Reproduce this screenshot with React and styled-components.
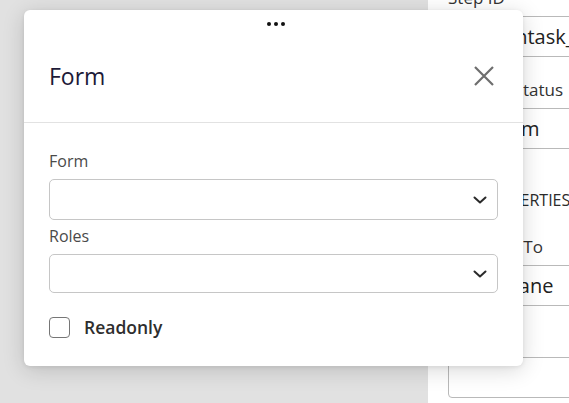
import React from "react";
import styled, { createGlobalStyle } from "styled-components";

const Global = createGlobalStyle`
  html, body { margin: 0; padding: 0; }
  body {
    width: 569px;
    height: 403px;
    overflow: hidden;
    font-family: "Open Sans", "Noto Sans", sans-serif;
  }
`;

const Page = styled.div`
  position: relative;
  display: flex;
  width: 569px;
  height: 403px;
  overflow: hidden;
`;

const Canvas = styled.div`
  flex: 1;
  background: #e1e1e1;
`;

const SidePanel = styled.aside`
  width: 141px;
  background: #ffffff;
  overflow: hidden;
  display: flex;
  flex-direction: column;
  padding-left: 20px;
  box-sizing: border-box;
`;

const SideInner = styled.div`
  display: flex;
  flex-direction: column;
  margin-top: -13px;
  width: 320px;
`;

const SideField = styled.div`
  display: flex;
  flex-direction: column;
  gap: 7px;
  margin-top: ${(p) => p.$top}px;
`;

const SideLabel = styled.div`
  font-size: 17px;
  line-height: 22px;
  color: #333;
  white-space: nowrap;
`;

const SideInput = styled.div`
  height: 41px;
  box-sizing: border-box;
  border: 1px solid #b9b9b9;
  border-radius: 4px;
  display: flex;
  align-items: center;
  padding: 0 12px;
  font-size: 20px;
  color: #222;
  white-space: nowrap;
`;

const SectionTitle = styled.div`
  margin-top: 40px;
  font-size: 16px;
  line-height: 22px;
  color: #2b2b2b;
  white-space: nowrap;
`;

const Dialog = styled.div`
  position: absolute;
  left: 24px;
  top: 10px;
  width: 499px;
  height: 356px;
  box-sizing: border-box;
  background: #fff;
  border-radius: 6px;
  box-shadow: 0 4px 22px rgba(0, 0, 0, 0.16), 0 1px 4px rgba(0, 0, 0, 0.08);
  display: flex;
  flex-direction: column;
`;

const Handle = styled.div`
  height: 24px;
  display: flex;
  justify-content: center;
  align-items: flex-start;
  padding-top: 12px;
  box-sizing: border-box;
  gap: 3px;
  padding-left: 4px;
`;

const Dot = styled.span`
  width: 4px;
  height: 4px;
  border-radius: 50%;
  background: #111;
`;

const Header = styled.div`
  height: 89px;
  display: flex;
  align-items: center;
  justify-content: space-between;
  padding: 0 28px 4px 25px;
  box-sizing: border-box;
  border-bottom: 1px solid #e2e2e2;
`;

const Title = styled.h2`
  margin: 0;
  font-size: 23px;
  font-weight: 500;
  color: #1d1a38;
  line-height: 30px;
`;

const CloseButton = styled.button`
  border: none;
  background: none;
  padding: 0;
  width: 22px;
  height: 22px;
  display: flex;
  cursor: pointer;
`;

const Body = styled.div`
  display: flex;
  flex-direction: column;
  padding: 28px 25px 0 25px;
`;

const FieldLabel = styled.label`
  font-size: 16px;
  line-height: 21px;
  color: #4a4a4a;
  margin-top: ${(p) => p.$top || 0}px;
`;

const Select = styled.div`
  margin-top: 7px;
  height: ${(p) => p.$h}px;
  box-sizing: border-box;
  border: 1px solid #c6c6c6;
  border-radius: 5px;
  display: flex;
  align-items: center;
  justify-content: flex-end;
  padding-right: 9px;
`;

const CheckRow = styled.div`
  margin-top: 23px;
  display: flex;
  align-items: center;
  gap: 14px;
`;

const Box = styled.span`
  width: 21px;
  height: 21px;
  box-sizing: border-box;
  border: 1.5px solid #767676;
  border-radius: 4px;
`;

const CheckLabel = styled.span`
  font-size: 17.5px;
  font-weight: 600;
  color: #2e2e2e;
  line-height: 22px;
`;

const Chevron = () => (
  <svg width="16" height="16" viewBox="0 0 16 16">
    <polyline
      points="2.5,5.5 8,10.5 13.5,5.5"
      fill="none"
      stroke="#2a2a2a"
      strokeWidth="2"
      strokeLinecap="round"
      strokeLinejoin="round"
    />
  </svg>
);

const CloseIcon = () => (
  <svg width="22" height="22" viewBox="0 0 22 22">
    <path
      d="M2 2 L20 20 M20 2 L2 20"
      stroke="#6e6e6e"
      strokeWidth="2.2"
      fill="none"
    />
  </svg>
);

export default function App() {
  return (
    <>
      <Global />
      <Page>
        <Canvas />
        <SidePanel>
          <SideInner>
            <SideField $top={0}>
              <SideLabel>Step ID</SideLabel>
              <SideInput>humantask_1</SideInput>
            </SideField>
            <SideField $top={22}>
              <SideLabel>Process Status</SideLabel>
              <SideInput>Random</SideInput>
            </SideField>
            <SectionTitle>ALL PROPERTIES</SectionTitle>
            <SideField $top={25}>
              <SideLabel>Assigned To</SideLabel>
              <SideInput>Mary Jane</SideInput>
            </SideField>
            <SideField $top={22}>
              <SideLabel>Notes</SideLabel>
              <SideInput />
            </SideField>
          </SideInner>
        </SidePanel>

        <Dialog>
          <Handle>
            <Dot />
            <Dot />
            <Dot />
          </Handle>
          <Header>
            <Title>Form</Title>
            <CloseButton aria-label="Close">
              <CloseIcon />
            </CloseButton>
          </Header>
          <Body>
            <FieldLabel>Form</FieldLabel>
            <Select $h={41}>
              <Chevron />
            </Select>
            <FieldLabel $top={6}>Roles</FieldLabel>
            <Select $h={39}>
              <Chevron />
            </Select>
            <CheckRow>
              <Box />
              <CheckLabel>Readonly</CheckLabel>
            </CheckRow>
          </Body>
        </Dialog>
      </Page>
    </>
  );
}
